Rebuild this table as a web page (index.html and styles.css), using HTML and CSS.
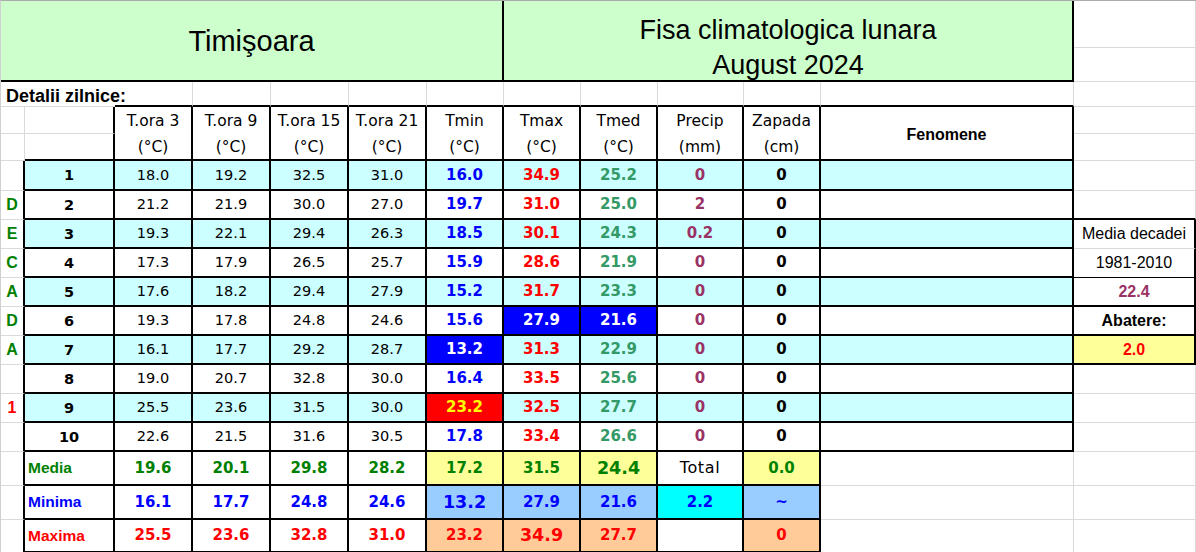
FILE: index.html
```html
<!DOCTYPE html>
<html lang="ro">
<head>
<meta charset="utf-8">
<title>Fisa climatologica lunara - Timişoara</title>
<link rel="stylesheet" href="styles.css">
</head>
<body>
<div class="sheet">
  <!-- rows 1-2: titles -->
  <div class="c tr tb title t1">Timişoara</div>
  <div class="c tr tb title t2"><span>Fisa climatologica lunara</span><span>August 2024</span></div>
  <div class="c"></div>
  <div class="c"></div>

  <!-- row 3 -->
  <div class="c nr detalii"><span>Detalii zilnice:</span></div>
  <div class="c nr"></div>
  <div class="c tb"></div>
  <div class="c tb"></div>
  <div class="c tb"></div>
  <div class="c tb"></div>
  <div class="c tb"></div>
  <div class="c tb"></div>
  <div class="c tb"></div>
  <div class="c tb"></div>
  <div class="c tb"></div>
  <div class="c tb"></div>
  <div class="c"></div>

  <!-- row 4 -->
  <div class="c"></div>
  <div class="c tr"></div>
  <div class="c tr nb w hd">T.ora 3</div>
  <div class="c tr nb w hd">T.ora 9</div>
  <div class="c tr nb w hd">T.ora 15</div>
  <div class="c tr nb w hd">T.ora 21</div>
  <div class="c tr nb w hd">Tmin</div>
  <div class="c tr nb w hd">Tmax</div>
  <div class="c tr nb w hd">Tmed</div>
  <div class="c tr nb w hd">Precip</div>
  <div class="c tr nb w hd">Zapada</div>
  <div class="c tr tb w fen">Fenomene</div>
  <div class="c"></div>

  <!-- row 5 -->
  <div class="c"></div>
  <div class="c tr tb"></div>
  <div class="c tr tb w hd">(°C)</div>
  <div class="c tr tb w hd">(°C)</div>
  <div class="c tr tb w hd">(°C)</div>
  <div class="c tr tb w hd">(°C)</div>
  <div class="c tr tb w hd">(°C)</div>
  <div class="c tr tb w hd">(°C)</div>
  <div class="c tr tb w hd">(°C)</div>
  <div class="c tr tb w hd">(mm)</div>
  <div class="c tr tb w hd">(cm)</div>
  <div class="c"></div>

  <!-- day 1 -->
  <div class="c tr"></div>
  <div class="c tr tb cy day">1</div>
  <div class="c tr tb cy num">18.0</div>
  <div class="c tr tb cy num">19.2</div>
  <div class="c tr tb cy num">32.5</div>
  <div class="c tr tb cy num">31.0</div>
  <div class="c tr tb cy val blue">16.0</div>
  <div class="c tr tb cy val red">34.9</div>
  <div class="c tr tb cy val teal">25.2</div>
  <div class="c tr tb cy val plum">0</div>
  <div class="c tr tb cy val">0</div>
  <div class="c tr tb cy"></div>
  <div class="c"></div>

  <!-- day 2 -->
  <div class="c tr dec">D</div>
  <div class="c tr tb day">2</div>
  <div class="c tr tb num">21.2</div>
  <div class="c tr tb num">21.9</div>
  <div class="c tr tb num">30.0</div>
  <div class="c tr tb num">27.0</div>
  <div class="c tr tb val blue">19.7</div>
  <div class="c tr tb val red">31.0</div>
  <div class="c tr tb val teal">25.0</div>
  <div class="c tr tb val plum">2</div>
  <div class="c tr tb val">0</div>
  <div class="c tr tb"></div>
  <div class="c tb"></div>

  <!-- day 3 -->
  <div class="c tr dec">E</div>
  <div class="c tr tb cy day">3</div>
  <div class="c tr tb cy num">19.3</div>
  <div class="c tr tb cy num">22.1</div>
  <div class="c tr tb cy num">29.4</div>
  <div class="c tr tb cy num">26.3</div>
  <div class="c tr tb cy val blue">18.5</div>
  <div class="c tr tb cy val red">30.1</div>
  <div class="c tr tb cy val teal">24.3</div>
  <div class="c tr tb cy val plum">0.2</div>
  <div class="c tr tb cy val">0</div>
  <div class="c tr tb cy"></div>
  <div class="c box side">Media decadei</div>

  <!-- day 4 -->
  <div class="c tr dec">C</div>
  <div class="c tr tb day">4</div>
  <div class="c tr tb num">17.3</div>
  <div class="c tr tb num">17.9</div>
  <div class="c tr tb num">26.5</div>
  <div class="c tr tb num">25.7</div>
  <div class="c tr tb val blue">15.9</div>
  <div class="c tr tb val red">28.6</div>
  <div class="c tr tb val teal">21.9</div>
  <div class="c tr tb val plum">0</div>
  <div class="c tr tb val">0</div>
  <div class="c tr tb"></div>
  <div class="c box thin side">1981-2010</div>

  <!-- day 5 -->
  <div class="c tr dec">A</div>
  <div class="c tr tb cy day">5</div>
  <div class="c tr tb cy num">17.6</div>
  <div class="c tr tb cy num">18.2</div>
  <div class="c tr tb cy num">29.4</div>
  <div class="c tr tb cy num">27.9</div>
  <div class="c tr tb cy val blue">15.2</div>
  <div class="c tr tb cy val red">31.7</div>
  <div class="c tr tb cy val teal">23.3</div>
  <div class="c tr tb cy val plum">0</div>
  <div class="c tr tb cy val">0</div>
  <div class="c tr tb cy"></div>
  <div class="c box tb side bold plum-a">22.4</div>

  <!-- day 6 -->
  <div class="c tr dec">D</div>
  <div class="c tr tb day">6</div>
  <div class="c tr tb num">19.3</div>
  <div class="c tr tb num">17.8</div>
  <div class="c tr tb num">24.8</div>
  <div class="c tr tb num">24.6</div>
  <div class="c tr tb val blue">15.6</div>
  <div class="c tr tb val hi-blue">27.9</div>
  <div class="c tr tb val hi-blue">21.6</div>
  <div class="c tr tb val plum">0</div>
  <div class="c tr tb val">0</div>
  <div class="c tr tb"></div>
  <div class="c box tb side bold">Abatere:</div>

  <!-- day 7 -->
  <div class="c tr dec">A</div>
  <div class="c tr tb cy day">7</div>
  <div class="c tr tb cy num">16.1</div>
  <div class="c tr tb cy num">17.7</div>
  <div class="c tr tb cy num">29.2</div>
  <div class="c tr tb cy num">28.7</div>
  <div class="c tr tb cy val hi-blue">13.2</div>
  <div class="c tr tb cy val red">31.3</div>
  <div class="c tr tb cy val teal">22.9</div>
  <div class="c tr tb cy val plum">0</div>
  <div class="c tr tb cy val">0</div>
  <div class="c tr tb cy"></div>
  <div class="c box tb side bold red-a yel">2.0</div>

  <!-- day 8 -->
  <div class="c tr"></div>
  <div class="c tr tb day">8</div>
  <div class="c tr tb num">19.0</div>
  <div class="c tr tb num">20.7</div>
  <div class="c tr tb num">32.8</div>
  <div class="c tr tb num">30.0</div>
  <div class="c tr tb val blue">16.4</div>
  <div class="c tr tb val red">33.5</div>
  <div class="c tr tb val teal">25.6</div>
  <div class="c tr tb val plum">0</div>
  <div class="c tr tb val">0</div>
  <div class="c tr tb"></div>
  <div class="c"></div>

  <!-- day 9 -->
  <div class="c tr dec red-a">1</div>
  <div class="c tr tb cy day">9</div>
  <div class="c tr tb cy num">25.5</div>
  <div class="c tr tb cy num">23.6</div>
  <div class="c tr tb cy num">31.5</div>
  <div class="c tr tb cy num">30.0</div>
  <div class="c tr tb cy val hi-red">23.2</div>
  <div class="c tr tb cy val red">32.5</div>
  <div class="c tr tb cy val teal">27.7</div>
  <div class="c tr tb cy val plum">0</div>
  <div class="c tr tb cy val">0</div>
  <div class="c tr tb cy"></div>
  <div class="c"></div>

  <!-- day 10 -->
  <div class="c tr"></div>
  <div class="c tr tb day">10</div>
  <div class="c tr tb num">22.6</div>
  <div class="c tr tb num">21.5</div>
  <div class="c tr tb num">31.6</div>
  <div class="c tr tb num">30.5</div>
  <div class="c tr tb val blue">17.8</div>
  <div class="c tr tb val red">33.4</div>
  <div class="c tr tb val teal">26.6</div>
  <div class="c tr tb val plum">0</div>
  <div class="c tr tb val">0</div>
  <div class="c tr tb"></div>
  <div class="c"></div>

  <!-- Media -->
  <div class="c tr"></div>
  <div class="c tr tb label green">Media</div>
  <div class="c tr tb val green">19.6</div>
  <div class="c tr tb val green">20.1</div>
  <div class="c tr tb val green">29.8</div>
  <div class="c tr tb val green">28.2</div>
  <div class="c tr tb val green yel">17.2</div>
  <div class="c tr tb val green yel">31.5</div>
  <div class="c tr tb val green yel big">24.4</div>
  <div class="c tr tb total">Total</div>
  <div class="c tr tb val green yel">0.0</div>
  <div class="c"></div>
  <div class="c"></div>

  <!-- Minima -->
  <div class="c tr"></div>
  <div class="c tr tb label blue">Minima</div>
  <div class="c tr tb val blue">16.1</div>
  <div class="c tr tb val blue">17.7</div>
  <div class="c tr tb val blue">24.8</div>
  <div class="c tr tb val blue">24.6</div>
  <div class="c tr tb val blue sky big">13.2</div>
  <div class="c tr tb val blue sky">27.9</div>
  <div class="c tr tb val blue sky">21.6</div>
  <div class="c tr tb val blue aqua">2.2</div>
  <div class="c tr tb val blue sky">~</div>
  <div class="c"></div>
  <div class="c"></div>

  <!-- Maxima -->
  <div class="c tr"></div>
  <div class="c tr tb label red">Maxima</div>
  <div class="c tr tb val red">25.5</div>
  <div class="c tr tb val red">23.6</div>
  <div class="c tr tb val red">32.8</div>
  <div class="c tr tb val red">31.0</div>
  <div class="c tr tb val red peach">23.2</div>
  <div class="c tr tb val red peach big">34.9</div>
  <div class="c tr tb val red peach">27.7</div>
  <div class="c tr tb"></div>
  <div class="c tr tb val red peach">0</div>
  <div class="c"></div>
  <div class="c"></div>
</div>
</body>
</html>
```

FILE: styles.css
```css
:root {
  --grid: #dadada;
  --ink: #000000;
}

html, body {
  margin: 0;
  padding: 0;
  background: #ffffff;
  overflow: hidden;
}

.sheet {
  display: grid;
  grid-template-columns: 24px 90px 78px 78px 78px 78px 77px 77px 77px 86px 77px 253px 122px;
  grid-template-rows: 47px 34px 25px 27px 27px 30px repeat(9, 29px) 34px 34px 33px;
  border-top: 1px solid #ababab;
  border-left: 1px solid #d0d0d0;
  width: max-content;
  font-family: "DejaVu Sans", "Liberation Sans", sans-serif;
  color: var(--ink);
}

.c {
  box-sizing: border-box;
  border-right: 1px solid var(--grid);
  border-bottom: 1px solid var(--grid);
  display: flex;
  align-items: center;
  justify-content: center;
  white-space: nowrap;
  min-width: 0;
}

.tr { border-right: 2px solid var(--ink); }
.tb { border-bottom: 2px solid var(--ink); }
.nb { border-bottom: 0; }
.nr { border-right: 0; }

.box { border-right: 2px solid var(--ink); }
.thin { border-bottom: 1px solid var(--ink); }

.w { background: #ffffff; }
.cy { background: #ccffff; }
.yel { background: #ffff99; }
.sky { background: #99ccff; }
.aqua { background: #00ffff; }
.peach { background: #ffcc99; }

.title {
  background: #ccffcc;
  font-family: "Liberation Sans", Arial, sans-serif;
  grid-row: span 2;
}

.t1 {
  grid-column: span 7;
  font-size: 29px;
  padding-top: 2px;
}

.t2 {
  grid-column: span 5;
  flex-direction: column;
  font-size: 27px;
  line-height: 35px;
  padding-top: 14px;
}

.detalii {
  justify-content: flex-start;
  align-items: flex-end;
  overflow: visible;
  font-family: "Liberation Sans", Arial, sans-serif;
  font-weight: bold;
  font-size: 18px;
  line-height: 20px;
  padding: 0 0 0 5px;
}

.hd {
  font-size: 15.5px;
}

.fen {
  grid-row: span 2;
  font-family: "Liberation Sans", Arial, sans-serif;
  font-weight: bold;
  font-size: 16px;
  padding-top: 3px;
}

.day {
  font-weight: bold;
  font-size: 14.5px;
}

.num {
  font-size: 14.5px;
  padding-bottom: 1px;
}

.total {
  font-size: 16px;
  letter-spacing: 0.6px;
  padding-bottom: 1px;
}

.val {
  font-family: "DejaVu Sans", "Liberation Sans", sans-serif;
  font-weight: bold;
  font-size: 15px;
  padding-bottom: 1px;
}

.big { font-size: 17.5px; }

.blue { color: #0000ff; }
.red { color: #ff0000; }
.teal { color: #339966; }
.plum { color: #993366; }
.green { color: #008000; }

.hi-blue { background: #0000ff; color: #ffffff; }
.hi-red { background: #ff0000; color: #ffff00; }

.dec {
  font-family: "Liberation Sans", Arial, sans-serif;
  font-weight: bold;
  font-size: 16px;
  color: #008000;
}

.dec.red-a { color: #ff0000; }

.label {
  justify-content: flex-start;
  padding-left: 3px;
  font-family: "Liberation Sans", Arial, sans-serif;
  font-weight: bold;
  font-size: 15.5px;
}

.side {
  font-family: "Liberation Sans", Arial, sans-serif;
  font-size: 16px;
}

.bold { font-weight: bold; }
.plum-a { color: #993366; }
.red-a { color: #ff0000; }
```
